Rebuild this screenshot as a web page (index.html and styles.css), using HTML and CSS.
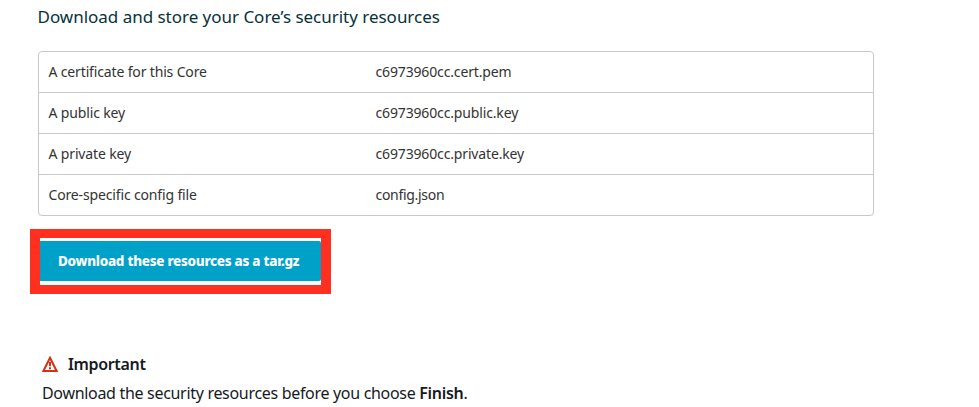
FILE: index.html
```html
<!DOCTYPE html>
<html lang="en">
<head>
<meta charset="utf-8">
<title>Security resources</title>
<link rel="stylesheet" href="styles.css">
</head>
<body>
<main class="page">
  <h1 class="title">Download and store your Core’s security resources</h1>
  <dl class="resources">
    <div class="row"><dt>A certificate for this Core</dt><dd>c6973960cc.cert.pem</dd></div>
    <div class="row"><dt>A public key</dt><dd>c6973960cc.public.key</dd></div>
    <div class="row"><dt>A private key</dt><dd>c6973960cc.private.key</dd></div>
    <div class="row"><dt>Core-specific config file</dt><dd class="config">config.json</dd></div>
  </dl>
  <div class="highlight"><button class="download">Download these resources as a tar.gz</button></div>
  <section class="note">
    <h2 class="note-title">
      <svg class="warn" viewBox="0 0 16 16" width="16" height="16"><path d="M8 1.8 14.6 15H1.4Z" fill="none" stroke="#d13212" stroke-width="2"/><path d="M8 6v4.3M8 11.3v2" fill="none" stroke="#d13212" stroke-width="2"/></svg>
      <span>Important</span>
    </h2>
    <p class="note-text">Download the security resources before you choose <b>Finish</b>.</p>
  </section>
</main>
</body>
</html>
```
FILE: styles.css
```css
* { box-sizing: border-box; }
body { margin: 0; background: #fff; font-family: "Noto Sans", sans-serif; }
h1, h2, p, dl, dd { margin: 0; }
.page { height: 407px; overflow: hidden; padding: 5px 0 0 30px; }
.title { margin-left: 7.5px; height: 46px; font-size: 17px; line-height: 24px; font-weight: 400; color: #07313a; letter-spacing: -0.02px; white-space: nowrap; }
.resources { margin-left: 8px; width: 836px; border: 1px solid #c8c8c8; border-radius: 4px; font-size: 14px; letter-spacing: -0.15px; color: #333; }
.row { display: grid; grid-template-columns: 327px 1fr; height: 41px; line-height: 40px; padding-left: 9.5px; border-bottom: 1px solid #c8c8c8; }
.row:last-child { height: 40px; border-bottom: 0; }
.config { letter-spacing: -0.3px; }
.highlight { display: flex; width: 301px; height: 65px; margin-top: 13px; padding: 3px 0; border: 9px solid #ff3020; border-left-width: 10px; border-right-width: 10px; }
.download { width: 281px; height: 40px; padding: 0 0 0 18px; border: 0; border-radius: 0 2px 2px 0; background: #00a1c9; color: #fff; font: 800 13.5px/40px "Noto Sans", sans-serif; letter-spacing: -0.28px; text-align: left; white-space: nowrap; }
.note { margin: 57px 0 0 12px; color: #16191f; font-size: 16px; }
.note-title { display: flex; align-items: center; gap: 10px; height: 26px; font-size: 16px; line-height: 26px; font-weight: 600; letter-spacing: -0.35px; }
.note-text { margin-top: 3px; line-height: 26px; white-space: nowrap; letter-spacing: -0.31px; }
.note-text b { font-weight: 600; }
```
